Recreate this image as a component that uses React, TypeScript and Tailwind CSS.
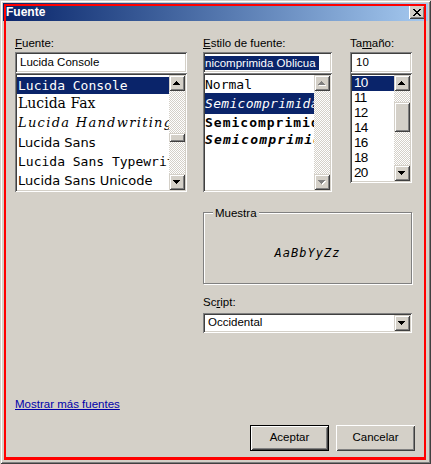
import React from 'react';

// classic 3D edges
const sunken = 'shadow-[inset_1px_1px_0_#808080,inset_-1px_-1px_0_#ffffff,inset_2px_2px_0_#404040,inset_-2px_-2px_0_#d4d0c8]';
const raised = 'shadow-[inset_1px_1px_0_#d4d0c8,inset_-1px_-1px_0_#404040,inset_2px_2px_0_#ffffff,inset_-2px_-2px_0_#808080]';
const btnRaised = 'shadow-[inset_1px_1px_0_#ffffff,inset_-1px_-1px_0_#404040,inset_2px_2px_0_#d4d0c8,inset_-2px_-2px_0_#808080]';
const track = 'bg-[repeating-conic-gradient(#ffffff_0_25%,#d4d0c8_0_50%)] bg-[length:2px_2px]';

const Arrow = ({ dir, disabled }: { dir: 'up' | 'down'; disabled?: boolean }) => {
    const d = dir === 'up' ? 'M3 0h1v1h1v1h1v1h1v1H0V3h1V2h1V1h1z' : 'M0 0h7v1H6v1H5v1H4v1H3V3H2V2H1V1H0z';
    return (
        <svg width="8" height="5" viewBox="0 0 8 5" shapeRendering="crispEdges">
            {disabled && <path d={d} fill="#ffffff" transform="translate(1 1)" />}
            <path d={d} fill={disabled ? '#808080' : '#000000'} />
        </svg>
    );
};

const ScrollBtn = ({ dir, disabled }: { dir: 'up' | 'down'; disabled?: boolean }) => (
    <div className={`w-[16px] h-[16px] shrink-0 flex items-center justify-center bg-[#d4d0c8] ${raised}`}>
        <Arrow dir={dir} disabled={disabled} />
    </div>
);

const ScrollBar = ({ thumb, disabled }: { thumb?: string; disabled?: boolean }) => (
    <div className="w-[16px] shrink-0 flex flex-col">
        <ScrollBtn dir="up" disabled={disabled} />
        <div className={`flex-1 ${track}`}>
            {thumb && <div className={`${thumb} bg-[#d4d0c8] ${raised}`} />}
        </div>
        <ScrollBtn dir="down" disabled={disabled} />
    </div>
);

const CloseGlyph = () => {
    const px: [number, number][] = [
        [0, 0], [1, 0], [6, 0], [7, 0],
        [1, 1], [2, 1], [5, 1], [6, 1],
        [2, 2], [3, 2], [4, 2], [5, 2],
        [3, 3], [4, 3],
        [2, 4], [3, 4], [4, 4], [5, 4],
        [1, 5], [2, 5], [5, 5], [6, 5],
        [0, 6], [1, 6], [6, 6], [7, 6],
    ];
    return (
        <svg width="8" height="7" viewBox="0 0 8 7" shapeRendering="crispEdges">
            {px.map(([x, y]) => <rect key={`${x}-${y}`} x={x} y={y} width="1" height="1" fill="#000000" />)}
        </svg>
    );
};

const Row = ({ h, selected, className, children }: { h: string; selected?: boolean; className: string; children: React.ReactNode }) => (
    <div className={`${h} flex items-center whitespace-nowrap ${selected ? 'bg-[#0a246a] text-white' : 'text-black'} ${className}`}>
        {children}
    </div>
);

const fonts = [
    { name: 'Lucida Console', h: 'h-[17px]', cls: "font-['DejaVu_Sans_Mono',monospace] text-[13px]", selected: true },
    { name: 'Lucida Fax', h: 'h-[19px]', cls: "font-['DejaVu_Serif',serif] text-[14px]" },
    { name: 'Lucida Handwriting', h: 'h-[20px]', cls: "font-['DejaVu_Serif',serif] italic text-[13px] tracking-[1.3px]" },
    { name: 'Lucida Sans', h: 'h-[19px]', cls: "font-['DejaVu_Sans',sans-serif] text-[13px]" },
    { name: 'Lucida Sans Typewriter', h: 'h-[19px]', cls: "font-['DejaVu_Sans_Mono',monospace] text-[13px]" },
    { name: 'Lucida Sans Unicode', h: 'h-[20px]', cls: "font-['DejaVu_Sans',sans-serif] text-[13px]" },
];

const styles = [
    { name: 'Normal', h: 'h-[17px]', cls: '' },
    { name: 'Semicomprimida', h: 'h-[21px]', cls: 'italic tracking-[0.3px]', selected: true },
    { name: 'Semicomprimida', h: 'h-[17px]', cls: 'font-bold tracking-[1px]' },
    { name: 'Semicomprimida', h: 'h-[18px]', cls: 'font-bold italic tracking-[1.2px]' },
];

const sizes = ['10', '11', '12', '14', '16', '18', '20'];

export default function App() {
    return (
        <div className="w-[431px] h-[464px] relative overflow-hidden bg-[#d4d0c8] p-[3px] flex flex-col font-['Liberation_Sans',Arial,sans-serif] text-[11.5px] text-black shadow-[inset_1px_1px_0_#d4d0c8,inset_-1px_-1px_0_#404040,inset_2px_2px_0_#ffffff,inset_-2px_-2px_0_#808080]">
            {/* Title bar */}
            <div className="h-[18px] shrink-0 flex items-center justify-between bg-linear-to-r from-[#0a246a] to-[#a6caf0] pl-[3px] pr-[3px]">
                <span className="text-white font-bold text-[12px] leading-none">Fuente</span>
                <div className={`w-[16px] h-[14px] flex items-center justify-center bg-[#d4d0c8] ${btnRaised}`}>
                    <CloseGlyph />
                </div>
            </div>

            <div className="flex flex-col pl-[12px] pt-[14px]">
                {/* Three columns */}
                <div className="flex items-start">
                    {/* Font */}
                    <div className="w-[172px] flex flex-col">
                        <div className="h-[17px] leading-[16px]"><span className="underline">F</span>uente:</div>
                        <div className={`h-[21px] bg-white ${sunken} flex items-center pl-[5px]`}>Lucida Console</div>
                        <div className={`h-[119px] bg-white ${sunken} p-[2px] flex`}>
                            <div className="flex-1 overflow-hidden pt-[2px]">
                                {fonts.map((f) => (
                                    <Row key={f.name} h={f.h} selected={f.selected} className={`pl-[1px] ${f.cls}`}>{f.name}</Row>
                                ))}
                            </div>
                            <ScrollBar thumb="mt-[42px] h-[9px]" />
                        </div>
                    </div>

                    {/* Style */}
                    <div className="w-[129px] ml-[16px] flex flex-col">
                        <div className="h-[17px] leading-[16px]"><span className="underline">E</span>stilo de fuente:</div>
                        <div className={`h-[21px] bg-white ${sunken} flex items-center pl-[2px] overflow-hidden`}>
                            <span className="bg-[#0a246a] text-white leading-[14px] pr-[3px] whitespace-nowrap">nicomprimida Oblicua</span>
                        </div>
                        <div className={`h-[119px] bg-white ${sunken} p-[2px] flex`}>
                            <div className="flex-1 overflow-hidden pt-[1px] font-['DejaVu_Sans_Mono',monospace] text-[13px]">
                                {styles.map((s, i) => (
                                    <Row key={i} h={s.h} selected={s.selected} className={s.cls}>{s.name}</Row>
                                ))}
                            </div>
                            <ScrollBar disabled />
                        </div>
                    </div>

                    {/* Size */}
                    <div className="w-[62px] ml-[18px] flex flex-col">
                        <div className="h-[17px] leading-[16px]">Ta<span className="underline">m</span>año:</div>
                        <div className={`h-[21px] bg-white ${sunken} flex items-center pl-[6px]`}>10</div>
                        <div className={`h-[110px] bg-white ${sunken} p-[2px] flex`}>
                            <div className="flex-1 overflow-hidden pt-[1px] text-[13.5px] tracking-[-0.8px]">
                                {sizes.map((s, i) => (
                                    <Row key={s} h="h-[15px]" selected={i === 0} className="pl-[2px]">{s}</Row>
                                ))}
                            </div>
                            <ScrollBar thumb="mt-[11px] h-[30px]" />
                        </div>
                    </div>
                </div>

                {/* Sample & script */}
                <div className="ml-[188px] w-[209px] flex flex-col">
                    <div className="relative mt-[20px] h-[72px] border border-[#808080] shadow-[inset_1px_1px_0_#ffffff,1px_1px_0_#ffffff] flex items-center justify-center pt-[10px]">
                        <span className="absolute -top-[7px] left-[9px] px-[2px] bg-[#d4d0c8] leading-[14px]">Muestra</span>
                        <span className="font-['DejaVu_Sans_Mono',monospace] italic text-[12px] tracking-[1px]">AaBbYyZz</span>
                    </div>
                    <div className="mt-[10px] h-[16px] leading-[16px]">Sc<span className="underline">r</span>ipt:</div>
                    <div className={`mt-[3px] h-[20px] bg-white ${sunken} p-[2px] flex`}>
                        <div className="flex-1 flex items-center pl-[3px]">Occidental</div>
                        <div className={`w-[16px] flex items-center justify-center bg-[#d4d0c8] ${raised}`}>
                            <Arrow dir="down" />
                        </div>
                    </div>
                </div>

                {/* Link */}
                <div className="mt-[63px] h-[16px] leading-[16px]">
                    <span className="text-[#0000aa] underline">Mostrar más fuentes</span>
                </div>

                {/* Buttons */}
                <div className="mt-[13px] mr-[13px] flex justify-end gap-[7px]">
                    <div className="w-[79px] h-[26px] border border-black">
                        <div className={`w-full h-full flex items-center justify-center ${btnRaised}`}>Aceptar</div>
                    </div>
                    <div className={`w-[79px] h-[26px] flex items-center justify-center ${btnRaised}`}>Cancelar</div>
                </div>
            </div>

            {/* red frame overlay */}
            <div className="absolute left-[4px] top-[4px] w-[422px] h-[456px] border-2 border-b-[3px] border-[#ff0000] pointer-events-none" />
        </div>
    );
}
